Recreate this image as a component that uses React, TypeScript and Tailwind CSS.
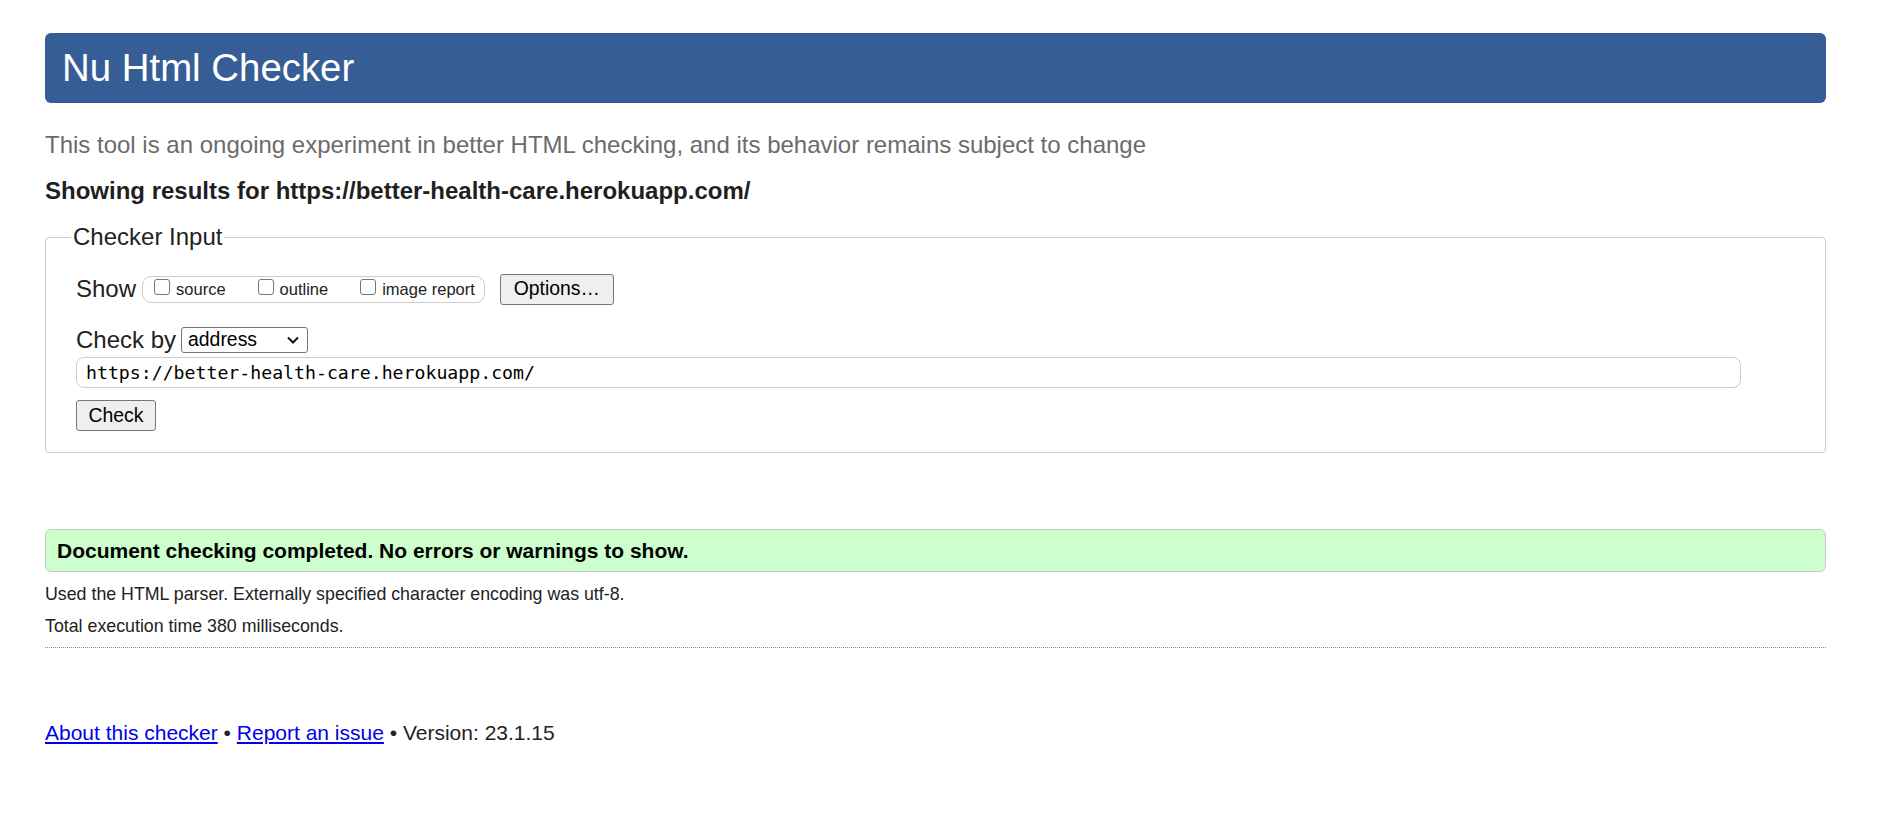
import React from 'react';

const Checkbox = () => (
    <span className="inline-block w-[16px] h-[16px] mb-[5px] border border-[#767676] rounded-[3px] bg-white shrink-0" />
);

const App = () => {
    return (
        <div className="min-h-screen bg-white font-['Liberation_Sans',Arial,sans-serif] text-[#222]">
            <div className="ml-[45px] mr-[56px] pt-[33px] pb-[60px]">
                <div className="flex items-center h-[70px] pl-[17px] rounded-[6px] bg-[#365d95]">
                    <h1 className="text-white text-[38.4px] leading-none">Nu Html Checker</h1>
                </div>

                <p className="mt-[28px] text-[24px] leading-[28px] text-[#6b6b6b]">
                    This tool is an ongoing experiment in better HTML checking, and its behavior remains subject to change
                </p>

                <p className="mt-[18px] text-[24px] leading-[28px] font-bold text-[#1f1f1f]">
                    Showing results for https://better-health-care.herokuapp.com/
                </p>

                <fieldset className="mt-[18px] border border-[#cccccc] rounded-[4px] pl-[30px] pb-[21px]">
                    <legend className="-ml-[5px] px-[2px] text-[24px] leading-[28px]">Checker Input</legend>

                    <div className="flex items-center h-[32px] mt-[22px]">
                        <span className="text-[24px] leading-[28px]">Show</span>
                        <div className="flex items-center h-[27px] ml-[6px] pl-[11px] pr-[9px] border border-[#cccccc] rounded-[9px]">
                            <Checkbox />
                            <span className="ml-[6px] text-[16.5px] leading-[20px]">source</span>
                            <span className="ml-[32px]" />
                            <Checkbox />
                            <span className="ml-[6px] text-[16.5px] leading-[20px]">outline</span>
                            <span className="ml-[32px]" />
                            <Checkbox />
                            <span className="ml-[6px] text-[16.5px] leading-[20px]">image report</span>
                        </div>
                        <button className="ml-[15px] h-[31px] w-[114px] bg-[#efefef] border border-[#767676] rounded-[3px] text-[19.4px] leading-none text-black">
                            Options…
                        </button>
                    </div>

                    <div className="flex items-center h-[30px] mt-[20px]">
                        <span className="text-[24px] leading-[28px]">Check by</span>
                        <div className="flex items-center justify-between ml-[5px] h-[26px] w-[127px] pl-[6px] pr-[8px] border border-[#767676] rounded-[3px] text-[19.4px] leading-none text-black">
                            <span>address</span>
                            <svg width="12" height="8" viewBox="0 0 12 8" fill="none">
                                <path d="M1 1.5 L6 6.5 L11 1.5" stroke="#111" strokeWidth="2" />
                            </svg>
                        </div>
                    </div>

                    <div className="flex items-center h-[31px] mt-[2px] mr-[84px] pl-[9px] border border-[#cccccc] rounded-[8px] font-['DejaVu_Sans_Mono',monospace] text-[18.2px] text-black">
                        https://better-health-care.herokuapp.com/
                    </div>

                    <button className="mt-[12px] h-[31px] w-[80px] bg-[#efefef] border border-[#767676] rounded-[3px] text-[19.4px] leading-none text-black">
                        Check
                    </button>
                </fieldset>

                <div className="flex items-center mt-[76px] h-[43px] pl-[11px] bg-[#ccffcc] border border-[#c8c8c8] rounded-[6px]">
                    <p className="text-[21px] leading-[26px] font-bold text-black">
                        Document checking completed. No errors or warnings to show.
                    </p>
                </div>

                <p className="mt-[11px] text-[17.8px] leading-[22px]">
                    Used the HTML parser. Externally specified character encoding was utf-8.
                </p>
                <p className="mt-[10px] text-[17.8px] leading-[22px]">Total execution time 380 milliseconds.</p>

                <div className="mt-[10px] border-t border-dotted border-[#8a8a8a]" />

                <p className="mt-[72px] text-[21px] leading-[26px]">
                    <a href="#" className="text-[#0000ee] underline">About this checker</a>
                    {' • '}
                    <a href="#" className="text-[#0000ee] underline">Report an issue</a>
                    {' • Version: 23.1.15'}
                </p>
            </div>
        </div>
    );
};

export default App;
